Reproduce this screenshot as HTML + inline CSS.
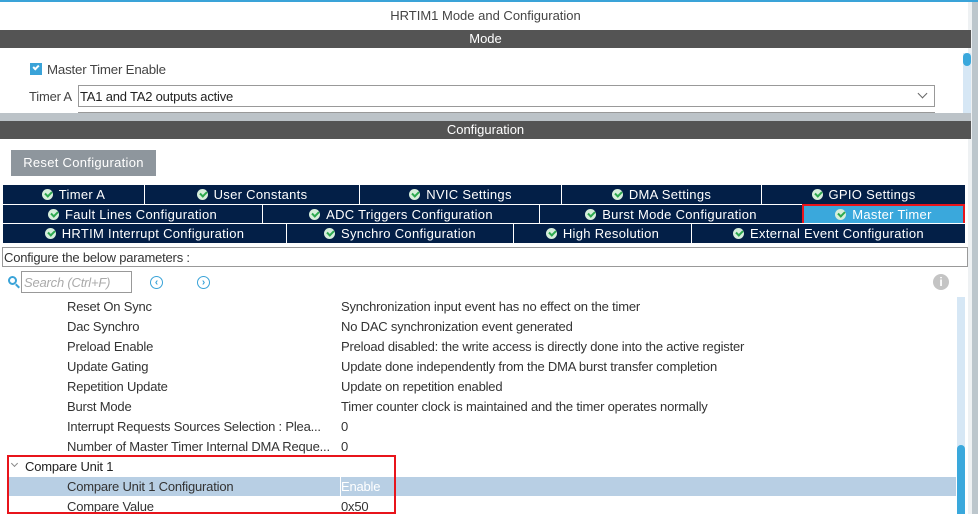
<!DOCTYPE html>
<html><head><meta charset="utf-8"><style>
*{margin:0;padding:0;box-sizing:border-box}
body{width:978px;height:514px;overflow:hidden;background:#fff;font-family:"Liberation Sans",sans-serif;position:relative;color:#333}
.a{position:absolute}
.bar{position:absolute;left:0;width:971px;height:18px;background:#545454;color:#fff;font-size:13px;text-align:center;line-height:18px}
.row{position:absolute;left:3px;width:962px;height:19px;background:#031f47}
.c{position:absolute;top:0;height:100%;color:#fff;font-size:13px;text-align:center;line-height:19px;border-left:1px solid #fff;letter-spacing:0.3px}
.c:first-child{border-left:none}
.ck{display:inline-block;width:11px;height:11px;border-radius:50%;background:#d6eedb;vertical-align:-1px;margin-right:6px;position:relative}
.ck:after{content:"";position:absolute;left:3px;top:2px;width:5px;height:3px;border-left:2px solid #2da94f;border-bottom:2px solid #2da94f;transform:rotate(-45deg)}
.p{position:absolute;font-size:13px;color:#333;white-space:nowrap;letter-spacing:-0.2px}
</style></head><body>
<div class="a" style="left:0;top:0;width:978px;height:2px;background:#3aa3d8"></div>
<div class="a" style="left:971px;top:2px;width:7px;height:512px;background:#bcc6cc"></div>
<div class="a" style="left:968px;top:2px;width:4px;height:512px;background:#eef1f3"></div>
<div class="a" style="left:0;top:8px;width:971px;text-align:center;font-size:13px;color:#444">HRTIM1 Mode and Configuration</div>
<div class="bar" style="top:30px">Mode</div>
<div class="a" style="left:963px;top:53px;width:8px;height:60px;background:#d6e7f5"></div>
<div class="a" style="left:963px;top:53px;width:8px;height:13px;background:#3aa8dc;border-radius:4px"></div>
<div class="a" style="left:30px;top:63px;width:12px;height:12px;background:#3aa3d8"></div>
<div class="a" style="left:33px;top:65px;width:6px;height:4px;border-left:2px solid #fff;border-bottom:2px solid #fff;transform:rotate(-45deg)"></div>
<div class="p" style="left:47px;top:62px;color:#444;font-size:13.3px">Master Timer Enable</div>
<div class="p" style="left:29px;top:89px;color:#444">Timer A</div>
<div class="a" style="left:78px;top:85px;width:857px;height:22px;border:1px solid #999"></div>
<div class="p" style="left:80px;top:89px;color:#222">TA1 and TA2 outputs active</div>
<div class="a" style="left:919px;top:90px;width:7px;height:7px;border-right:1px solid #666;border-bottom:1px solid #666;transform:rotate(45deg)"></div>
<div class="a" style="left:0;top:113px;width:971px;height:8px;background:#bcc3c8"></div>
<div class="a" style="left:78px;top:112px;width:857px;height:1px;background:#999"></div>
<div class="bar" style="top:121px">Configuration</div>
<div class="a" style="left:11px;top:150px;width:145px;height:26px;background:#8e969d;color:#fff;font-size:13px;text-align:center;line-height:26px;letter-spacing:0.3px">Reset Configuration</div>
<div class="row" style="top:185px">
<div class="c" style="left:0;width:141px"><span class="ck"></span>Timer A</div>
<div class="c" style="left:141px;width:215px"><span class="ck"></span>User Constants</div>
<div class="c" style="left:356px;width:202px"><span class="ck"></span>NVIC Settings</div>
<div class="c" style="left:558px;width:200px"><span class="ck"></span>DMA Settings</div>
<div class="c" style="left:758px;width:204px"><span class="ck"></span>GPIO Settings</div>
</div>
<div class="row" style="top:204px;border-top:1px solid #fff;height:19px">
<div class="c" style="left:0;width:259px"><span class="ck"></span>Fault Lines Configuration</div>
<div class="c" style="left:259px;width:277px"><span class="ck"></span>ADC Triggers Configuration</div>
<div class="c" style="left:536px;width:263px"><span class="ck"></span>Burst Mode Configuration</div>
<div class="c" style="left:799px;width:163px;background:#3aa8dc;border:2px solid #e8141b;line-height:18px;top:-1px;height:22px"><span class="ck"></span>Master Timer</div>
</div>
<div class="row" style="top:223px;border-top:1px solid #fff;height:20px">
<div class="c" style="left:0;width:283px"><span class="ck"></span>HRTIM Interrupt Configuration</div>
<div class="c" style="left:283px;width:227px"><span class="ck"></span>Synchro Configuration</div>
<div class="c" style="left:510px;width:178px"><span class="ck"></span>High Resolution</div>
<div class="c" style="left:688px;width:274px"><span class="ck"></span>External Event Configuration</div>
</div>
<div class="a" style="left:2px;top:247px;width:966px;height:20px;border:1px solid #999"></div>
<div class="p" style="left:4px;top:250px;color:#333">Configure the below parameters :</div>
<div class="a" style="left:8px;top:276px;width:9px;height:9px;border:2px solid #3aa3d8;border-radius:50%"></div>
<div class="a" style="left:15px;top:285px;width:5px;height:2px;background:#3aa3d8;transform:rotate(45deg)"></div>
<div class="a" style="left:21px;top:271px;width:111px;height:22px;border:1px solid #999"></div>
<div class="p" style="left:24px;top:275px;color:#aaa;font-style:italic">Search (Ctrl+F)</div>
<div class="a" style="left:150px;top:276px;width:13px;height:13px;border:1px solid #3aa3d8;border-radius:50%;color:#3aa3d8;font-size:10px;font-weight:bold;text-align:center;line-height:11px">&lsaquo;</div>
<div class="a" style="left:197px;top:276px;width:13px;height:13px;border:1px solid #3aa3d8;border-radius:50%;color:#3aa3d8;font-size:10px;font-weight:bold;text-align:center;line-height:11px">&rsaquo;</div>
<div class="a" style="left:933px;top:274px;width:16px;height:16px;border-radius:50%;background:#c4c4c4;color:#fff;font-size:12px;font-weight:bold;text-align:center;line-height:16px">i</div>
<div class="a" style="left:957px;top:297px;width:8px;height:217px;background:#d6e7f5"></div>
<div class="a" style="left:957px;top:445px;width:8px;height:69px;background:#3aa8dc;border-radius:4px 4px 0 0"></div>
<div class="a" style="left:7px;top:477px;width:949px;height:19px;background:#b8cfe4"></div>
<div class="a" style="left:340px;top:477px;width:1px;height:19px;background:#fff"></div>
<div class="p" style="left:67px;top:299px">Reset On Sync</div><div class="p" style="left:341px;top:299px">Synchronization input event has no effect on the timer</div>
<div class="p" style="left:67px;top:319px">Dac Synchro</div><div class="p" style="left:341px;top:319px">No DAC synchronization event generated</div>
<div class="p" style="left:67px;top:339px">Preload Enable</div><div class="p" style="left:341px;top:339px">Preload disabled: the write access is directly done into the active register</div>
<div class="p" style="left:67px;top:359px">Update Gating</div><div class="p" style="left:341px;top:359px">Update done independently from the DMA burst transfer completion</div>
<div class="p" style="left:67px;top:379px">Repetition Update</div><div class="p" style="left:341px;top:379px">Update on repetition enabled</div>
<div class="p" style="left:67px;top:399px">Burst Mode</div><div class="p" style="left:341px;top:399px">Timer counter clock is maintained and the timer operates normally</div>
<div class="p" style="left:67px;top:419px">Interrupt Requests Sources Selection : Plea...</div><div class="p" style="left:341px;top:419px">0</div>
<div class="p" style="left:67px;top:439px">Number of Master Timer Internal DMA Reque...</div><div class="p" style="left:341px;top:439px">0</div>
<div class="a" style="left:12px;top:461px;width:5px;height:5px;border-right:1px solid #888;border-bottom:1px solid #888;transform:rotate(45deg)"></div>
<div class="p" style="left:25px;top:459px;color:#222">Compare Unit 1</div>
<div class="p" style="left:67px;top:479px">Compare Unit 1 Configuration</div><div class="p" style="left:341px;top:479px;color:#fff">Enable</div>
<div class="p" style="left:67px;top:499px">Compare Value</div><div class="p" style="left:341px;top:499px">0x50</div>
<div class="a" style="left:7px;top:455px;width:389px;height:59px;border:2px solid #e8141b"></div>
</body></html>
